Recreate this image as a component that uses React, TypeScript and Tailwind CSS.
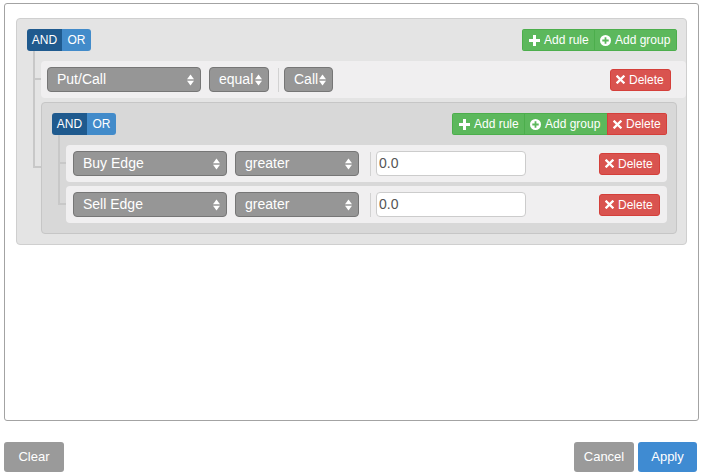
import clsx from 'clsx'
import type { ReactNode } from 'react'

const PlusIcon = () => (
  <svg width="11" height="11" viewBox="0 0 11 11" className="shrink-0">
    <path d="M4 0h3v4h4v3H7v4H4V7H0V4h4z" fill="white" />
  </svg>
)

const PlusSignIcon = () => (
  <svg width="11" height="11" viewBox="0 0 11 11" className="shrink-0">
    <circle cx="5.5" cy="5.5" r="5.5" fill="white" />
    <path d="M4.6 2.3h1.8v2.3h2.3v1.8H6.4v2.3H4.6V6.4H2.3V4.6h2.3z" fill="#5cb85c" />
  </svg>
)

const RemoveIcon = () => (
  <svg width="9" height="9" viewBox="0 0 9 9" className="shrink-0">
    <path d="M1.5 1.5l6 6M7.5 1.5l-6 6" stroke="white" strokeWidth="2.3" strokeLinecap="square" />
  </svg>
)

const Arrows = () => (
  <svg width="7" height="12" viewBox="0 0 7 12" className="absolute right-[6px] top-1/2 -translate-y-1/2">
    <path d="M0 5.2L3.5 0.4L7 5.2z" fill="white" />
    <path d="M0 6.8L7 6.8L3.5 11.6z" fill="white" />
  </svg>
)

const Select = ({ label, w }: { label: string; w: string }) => (
  <div className={clsx('relative flex h-[25px] shrink-0 items-center rounded-[4px] border border-[#767676] bg-[#969696] pl-[9px] text-[14px] text-white', w)}>
    {label}
    <Arrows />
  </div>
)

const Sep = ({ className }: { className?: string }) => (
  <div className={clsx('mr-[5px] h-[24px] w-px bg-[#d2d2d2]', className ?? 'ml-[9px]')} />
)

const Condition = () => (
  <div className="flex h-[22px] overflow-hidden rounded-[3px] text-[12px] text-white">
    <div className="flex w-[35px] items-center justify-center bg-[#1f5a8e]">AND</div>
    <div className="flex w-[29px] items-center justify-center bg-[#428bca]">OR</div>
  </div>
)

const GroupButtons = ({ del }: { del?: boolean }) => (
  <div className="flex h-[22px] overflow-hidden rounded-[3px] text-[12px] text-white">
    <div className="flex w-[72px] items-center gap-[4px] border-y border-l border-[#4cae4c] bg-[#5cb85c] pl-[6px]">
      <PlusIcon />
      Add rule
    </div>
    <div className={clsx('flex w-[83px] items-center gap-[4px] border-y border-l border-[#4cae4c] bg-[#5cb85c] pl-[5px]', !del && 'border-r')}>
      <PlusSignIcon />
      Add group
    </div>
    {del && (
      <div className="flex w-[60px] items-center gap-[4px] border border-[#d43f3a] bg-[#d9534f] pl-[5px]">
        <RemoveIcon />
        Delete
      </div>
    )}
  </div>
)

const DeleteButton = () => (
  <div className="ml-auto flex h-[22px] w-[61px] items-center gap-[4px] rounded-[3px] border border-[#d43f3a] bg-[#d9534f] pl-[5px] text-[12px] text-white">
    <RemoveIcon />
    Delete
  </div>
)

const RuleRow = ({ children, className }: { children: ReactNode; className?: string }) => (
  <div className={clsx('flex h-[37px] items-center rounded-[4px] bg-[#f0eff0]', className)}>
    {children}
    <DeleteButton />
  </div>
)

// tree connector: elbow into the item, plus a tail down to the next sibling
const Item = ({ first, last, children }: { first?: boolean; last?: boolean; children: ReactNode }) => (
  <div className="relative">
    <span
      className={clsx(
        'absolute -left-[8px] w-[8px] border-b-2 border-l-2 border-[#c8c8c8]',
        first ? '-top-[10px] h-[calc(50%+10px)]' : '-top-[4px] h-[calc(50%+4px)]'
      )}
    />
    {!last && <span className="absolute -bottom-[4px] -left-[8px] top-1/2 border-l-2 border-[#c8c8c8]" />}
    {children}
  </div>
)

const ValueInput = ({ value }: { value: string }) => (
  <div className="flex h-[25px] w-[150px] items-center rounded-[4px] border border-[#cccccc] bg-white pl-[2px] text-[14px] text-[#555]">
    {value}
  </div>
)

const EdgeRule = ({ field }: { field: string }) => (
  <RuleRow className="pl-[7px] pr-[7px]">
    <Select label={field} w="w-[154px]" />
    <div className="w-[8px]" />
    <Select label="greater" w="w-[124px]" />
    <Sep className="ml-[11px]" />
    <ValueInput value="0.0" />
  </RuleRow>
)

const NestedGroup = () => (
  <div className="rounded-[4px] border border-[#c6c6c6] bg-[#d8d8d8] p-[10px] pr-[9px]">
    <div className="flex items-center justify-between">
      <Condition />
      <GroupButtons del />
    </div>
    <div className="mt-[10px] flex flex-col gap-[4px] pl-[14px]">
      <Item first>
        <EdgeRule field="Buy Edge" />
      </Item>
      <Item last>
        <EdgeRule field="Sell Edge" />
      </Item>
    </div>
  </div>
)

const App = () => {
  return (
    <div className="h-[476px] w-[704px] bg-white px-[4px] pt-[3px] font-['Liberation_Sans',Arial,sans-serif]">
      <div className="h-[418px] w-[695px] rounded-[3px] border border-[#a3a3a3] px-[11px] pt-[14px]">
        <div className="rounded-[4px] border border-[#cfcfcf] bg-[#e4e4e4] p-[10px] pr-[9px]">
          <div className="flex items-center justify-between">
            <Condition />
            <GroupButtons />
          </div>
          <div className="mt-[10px] flex flex-col gap-[4px] pl-[14px]">
            <Item first>
              <RuleRow className="-mr-[9px] pl-[6px] pr-[15px]">
                <Select label="Put/Call" w="w-[154px]" />
                <div className="w-[8px]" />
                <Select label="equal" w="w-[60px]" />
                <Sep />
                <Select label="Call" w="w-[49px]" />
              </RuleRow>
            </Item>
            <Item last>
              <NestedGroup />
            </Item>
          </div>
        </div>
      </div>
      <div className="mr-[3px] mt-[21px] flex justify-between text-[13px] text-white">
        <div className="flex h-[30px] w-[60px] items-center justify-center rounded-[3px] bg-[#9a9a9a]">Clear</div>
        <div className="flex gap-[4px]">
          <div className="flex h-[30px] w-[60px] items-center justify-center rounded-[3px] bg-[#9a9a9a]">Cancel</div>
          <div className="flex h-[30px] w-[59px] items-center justify-center rounded-[3px] bg-[#3f8bd2]">Apply</div>
        </div>
      </div>
    </div>
  )
}

export default App
